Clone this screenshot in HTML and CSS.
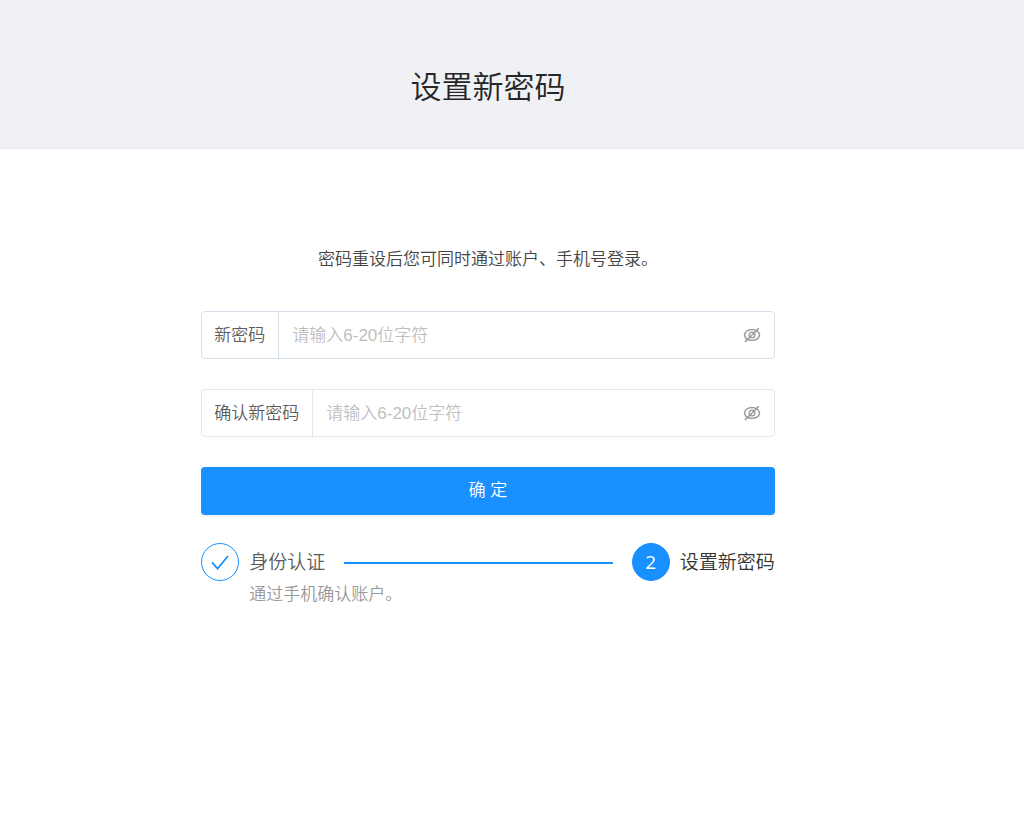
FILE: index.html
```html
<!DOCTYPE html>
<html lang="zh-CN">
<head>
  <meta charset="UTF-8">
  <meta name="viewport" content="width=device-width, initial-scale=1">
  <title>设置新密码</title>
  <link rel="stylesheet" href="styles.css">
</head>
<body>
  <header class="page-header">
    <h1>设置新密码</h1>
  </header>

  <main class="content">
    <p class="tip">密码重设后您可同时通过账户、手机号登录。</p>

    <form id="passwordForm" class="form">
      <div class="field active">
        <label for="password">新密码</label>
        <input type="password" id="password" placeholder="请输入6-20位字符">
        <button type="button" class="eye" aria-label="显示密码">
          <svg viewBox="0 0 18 18" width="18" height="18" fill="none" stroke="currentColor">
            <path d="M1.4 9C2.2 5.5 5.2 3.6 9 3.6S15.8 5.5 16.6 9C15.8 12.5 12.8 14.4 9 14.4S2.2 12.5 1.4 9Z" stroke-width="1.4"/>
            <circle cx="9" cy="9" r="2.9" stroke-width="1.4"/>
            <path d="M2 16L15.8 2.2" stroke-width="1.5"/>
          </svg>
        </button>
      </div>
      <div class="field">
        <label for="confirmPassword">确认新密码</label>
        <input type="password" id="confirmPassword" placeholder="请输入6-20位字符">
        <button type="button" class="eye" aria-label="显示密码">
          <svg viewBox="0 0 18 18" width="18" height="18" fill="none" stroke="currentColor">
            <path d="M1.4 9C2.2 5.5 5.2 3.6 9 3.6S15.8 5.5 16.6 9C15.8 12.5 12.8 14.4 9 14.4S2.2 12.5 1.4 9Z" stroke-width="1.4"/>
            <circle cx="9" cy="9" r="2.9" stroke-width="1.4"/>
            <path d="M2 16L15.8 2.2" stroke-width="1.5"/>
          </svg>
        </button>
      </div>
      <button type="submit" class="submit">确 定</button>
    </form>

    <div class="steps">
      <div class="step done">
        <span class="step-icon">
          <svg viewBox="0 0 18 18" width="18" height="18" fill="none" stroke="currentColor" stroke-width="1.7">
            <path d="M1 9.4L6.6 15.6L17 3"/>
          </svg>
        </span>
        <div class="step-text">
          <div class="step-title">身份认证</div>
          <div class="step-desc">通过手机确认账户。</div>
        </div>
      </div>
      <div class="step current">
        <span class="step-icon">2</span>
        <div class="step-title">设置新密码</div>
      </div>
    </div>
  </main>

  <script>
    document.querySelectorAll('.eye').forEach(function (button) {
      button.addEventListener('click', function () {
        const input = button.parentElement.querySelector('input');
        input.type = input.type === 'password' ? 'text' : 'password';
      });
    });

    document.getElementById('passwordForm').addEventListener('submit', function (e) {
      e.preventDefault();
    });
  </script>
</body>
</html>
```
FILE: styles.css
```css
* {
  box-sizing: border-box;
}

body {
  margin: 0;
  background-color: #fff;
  color: #444;
  font-family: "Liberation Sans", "Noto Sans CJK SC", sans-serif;
  font-size: 17px;
  font-weight: 350;
  line-height: 26px;
}

button,
input {
  font: inherit;
}

.page-header {
  padding: 65px 48px 38px 0;
  background-color: #f0f1f5;
  border-bottom: 1px solid #ebecf0;
  text-align: center;
}

.page-header h1 {
  margin: 0;
  color: #262626;
  font-size: 31px;
  font-weight: 350;
  line-height: 45px;
}

.content {
  width: 56%;
  margin-left: calc(22% - 24px);
}

.tip {
  margin: 0;
  padding: 98px 0 38px;
  text-align: center;
}

.form {
  display: flex;
  flex-direction: column;
  gap: 30px;
}

.field {
  display: flex;
  align-items: center;
  height: 48px;
  border: 1px solid #e4e5e7;
  border-radius: 4px;
}

.field.active {
  border-color: #d6e0ea;
}

.field label {
  padding: 11px 13px 9px 12px;
  border-right: 1px solid #e4e5e7;
  color: #5c5c5c;
}

.field.active label {
  border-color: #d0dce6;
}

.field input {
  flex: 1;
  min-width: 0;
  height: 100%;
  padding: 2px 13px 0;
  border: none;
  outline: none;
  background: none;
}

.field input::placeholder {
  color: #bfbfbf;
}

.eye {
  display: flex;
  margin-right: 13px;
  padding: 0;
  border: none;
  background: none;
  color: #999;
  cursor: pointer;
}

.submit {
  height: 48px;
  border: none;
  border-radius: 4px;
  background-color: #1890ff;
  box-shadow: 0 2px 0 rgba(0, 0, 0, 0.04);
  color: #fff;
  cursor: pointer;
}

.steps {
  display: flex;
  align-items: flex-start;
  margin-top: 28px;
}

.step {
  display: flex;
  gap: 10px;
}

.step.done {
  flex: 1;
}

.step-text {
  flex: 1;
}

.step-icon {
  display: flex;
  flex: none;
  align-items: center;
  justify-content: center;
  width: 38px;
  height: 38px;
  border: 1px solid #1890ff;
  border-radius: 50%;
  color: #1890ff;
  font-family: "Open Sans", "Noto Sans", sans-serif;
  font-size: 19px;
  font-weight: 400;
}

.step.current .step-icon {
  background-color: #1890ff;
  color: #fff;
}

.step-title {
  display: flex;
  align-items: center;
  color: #5c5c5c;
  font-size: 19px;
  line-height: 40px;
}

.step.current .step-title {
  color: #333;
}

/* connector line to the next step */
.step.done .step-title::after {
  content: "";
  flex: 1;
  height: 2px;
  margin: 0 19px;
  background-color: #1890ff;
}

.step-desc {
  color: #999;
  line-height: 24px;
}
```
